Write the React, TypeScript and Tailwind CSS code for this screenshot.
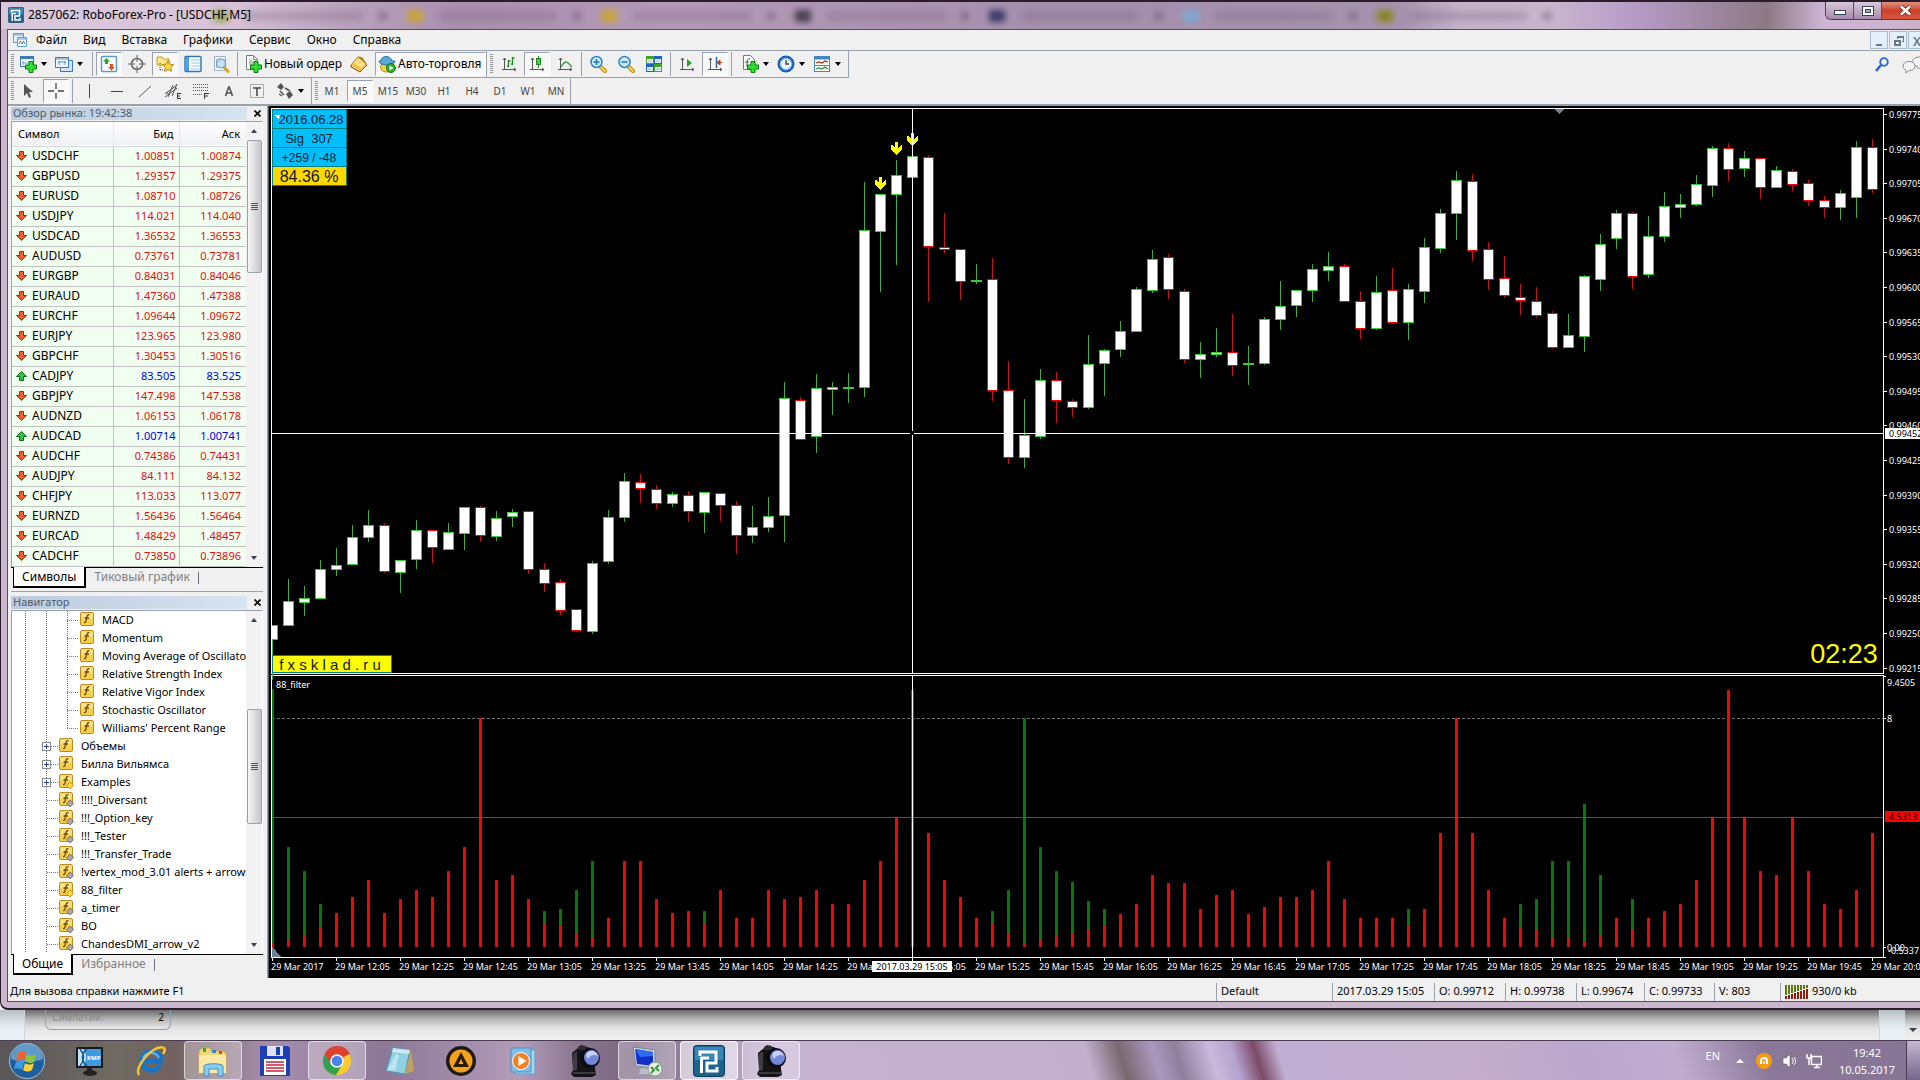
import React from "react";

type Dir = "g" | "r";
type Candle = [Dir, number, number, number, number];

// direction, high, body top, body bottom, low
const candles: Candle[] = [
  ["g", 625, 625, 640, 680], ["g", 579, 601, 626, 626], ["g", 586, 598, 603, 616], ["g", 560, 569, 599, 599],
  ["g", 548, 565, 570, 576], ["g", 525, 537, 565, 565], ["g", 510, 525, 538, 542], ["r", 523, 525, 572, 573],
  ["g", 560, 560, 573, 593], ["g", 520, 530, 560, 569], ["r", 530, 530, 548, 563], ["g", 523, 532, 550, 550],
  ["g", 507, 507, 534, 550], ["r", 506, 507, 536, 542], ["g", 511, 518, 537, 541], ["g", 509, 512, 517, 527],
  ["r", 511, 511, 570, 574], ["r", 563, 569, 584, 592], ["r", 579, 582, 611, 615], ["r", 609, 609, 631, 632],
  ["g", 561, 563, 632, 634], ["g", 510, 517, 562, 564], ["g", 473, 481, 518, 522], ["r", 474, 482, 489, 503],
  ["r", 485, 489, 504, 509], ["g", 492, 494, 504, 507], ["r", 491, 495, 512, 522], ["g", 492, 492, 513, 533],
  ["r", 493, 493, 506, 521], ["r", 501, 505, 536, 554], ["g", 506, 527, 536, 543], ["g", 497, 516, 528, 532],
  ["g", 382, 398, 516, 542], ["r", 397, 400, 440, 440], ["g", 374, 388, 437, 453], ["g", 382, 387, 390, 415],
  ["g", 373, 387, 389, 403], ["g", 182, 230, 388, 397], ["g", 194, 194, 232, 292], ["g", 160, 175, 195, 265],
  ["g", 156, 156, 178, 178], ["r", 155, 157, 247, 302], ["r", 213, 247, 250, 253], ["r", 249, 249, 282, 300],
  ["g", 264, 280, 282, 284], ["r", 258, 279, 391, 401], ["r", 361, 390, 458, 464], ["g", 399, 435, 458, 468],
  ["g", 369, 380, 437, 439], ["r", 372, 380, 401, 423], ["r", 399, 401, 408, 417], ["g", 335, 364, 408, 409],
  ["g", 349, 350, 364, 396], ["g", 321, 331, 350, 357], ["g", 287, 289, 332, 332], ["g", 250, 259, 291, 293],
  ["r", 254, 257, 290, 299], ["r", 289, 291, 360, 363], ["g", 342, 354, 360, 378], ["g", 328, 352, 355, 357],
  ["r", 314, 352, 366, 376], ["g", 346, 363, 365, 385], ["g", 317, 319, 364, 365], ["g", 281, 306, 320, 330],
  ["g", 290, 290, 306, 317], ["g", 264, 269, 291, 302], ["g", 252, 266, 271, 281], ["r", 264, 266, 302, 302],
  ["r", 291, 301, 329, 339], ["g", 276, 292, 329, 330], ["r", 268, 290, 323, 324], ["g", 284, 289, 323, 340],
  ["g", 238, 247, 292, 303], ["g", 209, 213, 249, 253], ["g", 171, 180, 214, 240], ["r", 174, 181, 251, 261],
  ["r", 242, 249, 280, 290], ["r", 256, 278, 296, 298], ["r", 284, 297, 301, 315], ["r", 287, 301, 316, 318],
  ["r", 311, 313, 348, 349], ["g", 314, 335, 348, 348], ["g", 275, 276, 337, 352], ["g", 234, 244, 280, 291],
  ["g", 210, 213, 239, 249], ["r", 212, 213, 277, 289], ["g", 216, 236, 275, 278], ["g", 192, 206, 237, 242],
  ["g", 194, 204, 208, 218], ["g", 175, 184, 205, 206], ["g", 146, 148, 186, 197], ["r", 143, 148, 170, 181],
  ["g", 151, 158, 169, 177], ["r", 158, 158, 188, 199], ["g", 166, 170, 188, 188], ["r", 169, 171, 185, 191],
  ["r", 180, 183, 201, 206], ["r", 196, 200, 208, 218], ["g", 190, 193, 208, 220], ["g", 141, 147, 198, 218],
  ["r", 139, 147, 190, 193],
];

// bar top, or [green top, red top]
const filter: (number | [number, number])[] = [
  [689, 944], [847, 939], [871, 936], [904, 928], 913, 897, 880, 913, 899, 890, 897, 871, 847, 718, 880, 875, 899,
  [911, 924], [909, 925], [890, 933], [861, 937], 918, 861, 861, 899, 913, 911, [911, 924], 890, 918, 918, 890,
  899, 897, 890, 904, 904, 880, 861, 817, 690, 833, 880, 897, 918, [911, 924], [890, 933], [718, 943], [847, 939],
  [871, 936], [882, 934], [901, 929], [909, 926], 914, 904, 875, 883, 883, 909, 895, 890, 914, 907, 897, 897, 890,
  861, 899, 918, 918, 918, [909, 926], 909, 833, 718, 833, 890, 918, [904, 928], [899, 930], [861, 937],
  [861, 937], [804, 941], [875, 936], 918, [899, 930], 918, 911, 904, 880, 817, 690, 817, 871, 875, 817, 871, 904,
  909, 890, 833,
];

const barX = (i: number) => 272 + i * 16;
const pad = (n: number) => String(n).padStart(2, "0");
const timeLabels = Array.from({ length: 26 }, (_, k) => {
  if (k === 0) return "29 Mar 2017";
  const m = 12 * 60 + 5 + (k - 1) * 20;
  return `29 Mar ${pad(Math.floor(m / 60))}:${pad(m % 60)}`;
});
const priceLabels = Array.from({ length: 17 }, (_, k) => (0.99775 - k * 0.00035).toFixed(5));

function Chart() {
  return (
    <svg
      className="block h-full w-full bg-black font-['Noto_Sans',sans-serif]"
      viewBox="269 106 1651 872"
      preserveAspectRatio="xMinYMin slice"
      role="img"
      aria-label="USDCHF,M5"
    >
      <defs>
        <clipPath id="plot"><rect x="272" y="109" width="1611" height="848" /></clipPath>
      </defs>
      <g shapeRendering="crispEdges">
        <path d="M271 108H1884V674H271ZM272 109V673H1883V109ZM271 675H1884V958H271ZM272 676V957H1883V676Z" fill="#fff" fillRule="evenodd" />
        <g clipPath="url(#plot)">
          {candles.map(([d, hi, top, bot, lo], i) => {
            const c = d === "g" ? "#32cd32" : "#ff0000";
            const x = barX(i);
            return (
              <g key={i}>
                <rect x={x} y={hi} width="1" height={lo - hi} fill={d === "g" ? "#3fae3f" : "#c81414"} />
                <rect x={x - 5} y={top} width="11" height={bot - top} fill={c} />
                {bot - top > 2 && <rect x={x - 4} y={top + 1} width="9" height={bot - top - 2} fill="#fff" />}
              </g>
            );
          })}
          <path d="M272 718.5H1883" stroke="#6f6f6f" strokeDasharray="3 2" />
          {filter.map((v, i) => {
            const x = barX(i) - 1;
            return Array.isArray(v) ? (
              <g key={i}>
                <rect x={x} y={v[0]} width="3" height={947 - v[0]} fill="#0b760b" />
                <rect x={x} y={v[1]} width="3" height={947 - v[1]} fill="#e80808" />
              </g>
            ) : (
              <rect key={i} x={x} y={v} width="3" height={947 - v} fill="#f00808" />
            );
          })}
          <path d="M272 817.5H1883" stroke="#f01010" />
          <path d="M272 946V957H281Z" fill="#708090" />
        </g>
        <path d="M1555 109H1564L1559.5 114Z" fill="#708090" />
        {[[880, 177], [896, 142], [912, 133]].map(([x, y]) => (
          <path key={x} d={`M${x - 1} ${y}h3v6l3-3h1v4l-5 6h-1l-5-6v-4h1l3 3Z`} fill="#ffff00" />
        ))}
        <path d="M271 433.5H910M914 433.5H1884M912.5 109V431M912.5 435V673M912.5 676V958" stroke="#fff" />
        <path d="M911 431h3v4h-3z" fill="#000" />

        <g stroke="#008080">
          <rect x="272.5" y="109.5" width="74" height="19" fill="#00bfff" />
          <rect x="272.5" y="128.5" width="74" height="19" fill="#00bfff" />
          <rect x="272.5" y="147.5" width="74" height="19" fill="#00bfff" />
          <rect x="272.5" y="166.5" width="74" height="19" fill="#ffd700" />
          <rect x="272.5" y="655.5" width="119" height="17" fill="#ffff00" />
        </g>
        <path d="M275 115h7l-3.500 4z" fill="#fff" />
        {priceLabels.map((_, k) => (
          <rect key={k} x="1884" y={Math.round(114 + k * 34.6)} width="3" height="1" fill="#fff" />
        ))}
        {timeLabels.map((_, k) => (
          <rect key={k} x={272 + 64 * k} y="958" width="1" height="3" fill="#fff" />
        ))}
        <path d="M1884 676h2v1h-2zM1884 718h2v1h-2zM1884 947h2v1h-2zM1884 957h2v1h-2z" fill="#fff" />
      </g>

      <g className="font-['Liberation_Sans',Arial,sans-serif]" fill="#0a1a2a" textAnchor="middle">
        <text x="311" y="124" fontSize="13">2016.06.28</text>
        <text x="309" y="143" fontSize="13">Sig&#160; 307</text>
        <text x="309" y="162" fontSize="12">+259 / -48</text>
        <text x="309" y="182" fontSize="16">84.36 %</text>
        <text x="330" y="670" fontSize="15">f x s k l a d . r u</text>
        <text x="1844" y="663" fontSize="27" fill="#ffff00">02:23</text>
      </g>

      <g fill="#fff" fontSize="9">
        {priceLabels.map((p, k) => (
          <text key={p} x="1889" y={Math.round(118 + k * 34.6)}>{p}</text>
        ))}
        {timeLabels.map((t, k) => (
          <text key={t} x={271 + 64 * k} y="970">{t}</text>
        ))}
        <text x="276" y="688">88_filter</text>
        <text x="1887" y="686">9.4505</text>
        <text x="1887" y="722">8</text>
        <text x="1887" y="951">0.00</text>
        <text x="1888" y="954">-0.5337</text>
      </g>
      <rect x="1885" y="428" width="35" height="11" fill="#fff" />
      <rect x="1885" y="811" width="35" height="11" fill="#f00" />
      <rect x="872" y="961" width="80" height="11" fill="#fff" />
      <g fill="#000" fontSize="9">
        <text x="1889" y="437">0.99452</text>
        <text x="1889" y="820">4.5313</text>
        <text x="912" y="970" textAnchor="middle">2017.03.29 15:05</text>
      </g>
    </svg>
  );
}

/* ---------- toolbar icons ---------- */

const I = ({ children, w = 18 }: { children: React.ReactNode; w?: number }) => (
  <svg viewBox="0 0 18 18" width={w} height={w} fill="none" className="shrink-0" aria-hidden="true">{children}</svg>
);
const Plus = () => <path d="M10 6.500h4v3.500h3.500v4H14v3.500h-4V14H6.500v-4H10z" fill="#2ee02e" stroke="#0b7d12" />;
const Mag = ({ minus }: { minus?: boolean }) => (
  <I>
    <path d="M11 11l5 5" stroke="#b98a12" strokeWidth="4" strokeLinecap="round" />
    <path d="M11 11l5 5" stroke="#ffd84a" strokeWidth="2" strokeLinecap="round" />
    <circle cx="7.500" cy="7" r="5.500" fill="#c9ecff" stroke="#2f86c4" strokeWidth="1.500" />
    <path d={minus ? "M4.500 7h6" : "M4.500 7h6M7.500 4v6"} stroke="#2272bb" strokeWidth="1.500" />
  </I>
);
const Axes = () => <path d="M4.500 3v12M2 14.500h14M3 5l1.500-2L6 5M14 13l2 1.500-2 1.500" stroke="#555" />;

const icons: Record<string, React.ReactNode> = {
  newChart: <I><rect x="1.500" y="1.500" width="13" height="10" fill="#eaf4ff" stroke="#3c7ab5" /><path d="M2 3h12" stroke="#3c7ab5" strokeWidth="2" /><path d="M4 6v4M4 8h7" stroke="#7aa6cf" /><Plus /></I>,
  profiles: <I><path d="M5.500 5.500h12v11h-12z" fill="#cfe4f8" stroke="#3c7ab5" /><path d="M.500 2.500h13v10H.500z" fill="#f1f8ff" stroke="#3c7ab5" /><path d="M1 4h12M3 7h8M4 6v4M10 6v4" stroke="#5b8fc4" /></I>,
  market: <I><rect x="1.500" y="1.500" width="15" height="15" rx="1" fill="#fff" stroke="#5b9bd0" strokeWidth="1.500" /><path d="M6.500 3l3.500 3.500H8V9H5V6.500H3z" fill="#22a722" /><path d="M11.500 15.500L15 12h-2V9h-3v3H8z" fill="#e0501e" /></I>,
  target: <I><circle cx="9" cy="9" r="5.500" stroke="#666" strokeWidth="1.500" /><path d="M9 0v7M9 11v7M0 9h7M11 9h7" stroke="#666" /></I>,
  star: <I><path d="M1 2h5l1.500 2H13v6H1z" fill="#ffe88a" stroke="#c79a1e" /><path d="M4 8v8M4 15h4" stroke="#444" strokeDasharray="1 1" /><path d="M12 5.500l1.700 3.700 3.900.4-2.900 2.700.8 4-3.500-2-3.500 2 .8-4-2.900-2.700 3.900-.4z" fill="#ffdf3d" stroke="#b8860b" /></I>,
  data: <I><rect x="1" y="1.500" width="16" height="15" rx="1" fill="#fff" stroke="#2f78b8" strokeWidth="1.500" /><path d="M2 2h3v14H2z" fill="#4b9be0" /><path d="M7 5h9M7 8h9M7 11h9M7 14h9M3 5h1M3 8h1M3 11h1" stroke="#9cc3e6" /></I>,
  tester: <I><path d="M2.500 1.500h11v14h-11z" fill="#f5f9fd" stroke="#9bb3c9" /><path d="M5 4v9M8 3v5M12 4v7" stroke="#779" /><path d="M12 12l4 4.500" stroke="#d9a420" strokeWidth="3" strokeLinecap="round" /><circle cx="9" cy="8.500" r="4.500" fill="#bfe1fa" fillOpacity=".85" stroke="#5f93bd" /></I>,
  order: <I><path d="M2.500.500h7l4 4v10h-11z" fill="#fff" stroke="#777" /><path d="M9.500.500v4h4M5 5h3M5 7h6M5 9h4" stroke="#888" /><Plus /></I>,
  gold: <I><path d="M1 10L8 2l4 1 5 7-7 7-9-5z" fill="#d08d14" stroke="#8a5c06" /><path d="M1 10L8 2l8 7-6 6z" fill="#f7bd3c" /><path d="M8 3l7 6-4 4-7-5z" fill="#ffdf8a" /><path d="M2 11l8 4.500 6-6" stroke="#fff3c8" /></I>,
  auto: <I><ellipse cx="8.500" cy="12" rx="6" ry="5" fill="#f7d24a" stroke="#b08616" /><path d="M3 6c0-6 10-6 11 0l3 0c0 2-3 4-8 4S1 8 1 6z" fill="#58a8dd" stroke="#2b6e9f" /><circle cx="13" cy="13" r="4.500" fill="#29b42b" stroke="#0f7013" /><path d="M11.500 10.500l4 2.500-4 2.500z" fill="#fff" /></I>,
  bars: <I><Axes /><path d="M8.500 5v7M7 11h1.500M8.500 6h2M12.500 2v8M12.500 3h2M11 9h1.500" stroke="#1c8a1c" strokeWidth="1.300" /></I>,
  candle: <I><Axes /><path d="M10.500 1v12" stroke="#1c8a1c" /><rect x="8.500" y="3.500" width="4" height="6" fill="#45cf45" stroke="#1c8a1c" /></I>,
  line: <I><Axes /><path d="M5 12c2-3 3-5 5-5s3 2 6 5" stroke="#3a9c3a" strokeWidth="1.300" /></I>,
  zoomIn: <Mag />,
  zoomOut: <Mag minus />,
  tile: <I><path d="M1 1h8v8H1zM9 9h8v8H9z" fill="#3fa51f" /><path d="M9 1h8v8H9zM1 9h8v8H1z" fill="#1f62c4" /><path d="M2 4h6v4H2zM10 4h6v4h-6zM2 12h6v4H2zM10 12h6v4h-6z" fill="#e8f3ff" /><path d="M3 6h4M11 6h4M3 14h4M11 14h4" stroke="#8fb1d6" /></I>,
  scroll: <I><Axes /><path d="M9 4l5 4-5 4z" fill="#28a428" /></I>,
  shift: <I><Axes /><path d="M10.500 2v11" stroke="#2b66a8" strokeWidth="1.500" /><path d="M16 7.500h-4M14 5l-3 2.500 3 2.500z" stroke="#c03a10" fill="#c03a10" /></I>,
  indic: <I><path d="M2.500.500h7l4 4v10h-11z" fill="#fff" stroke="#777" /><path d="M9 4c-3-1-3 2-3 8M4 7h4" stroke="#555" /><Plus /></I>,
  clock: <I><circle cx="9" cy="9" r="8" fill="#1e74cf" stroke="#0f4b94" /><circle cx="9" cy="9" r="5.500" fill="#f4f9ff" stroke="#8abdf0" /><path d="M9 5v4h3" stroke="#333" strokeWidth="1.300" /></I>,
  templ: <I><rect x="1.500" y="1.500" width="15" height="15" fill="#fff" stroke="#4d86bd" /><path d="M2 3h14" stroke="#3d86cf" strokeWidth="3" /><path d="M2 10.500h14" stroke="#4d86bd" /><path d="M3 8l3-1 3 1 3-2 3 1" stroke="#a02b10" strokeWidth="1.300" /><path d="M3 14l3-1 3 1 3-2 3 2" stroke="#2b8b2b" strokeWidth="1.300" /></I>,
  cursor: <I><path d="M5 2v12l3-3 2 5 2-1-2-5h4z" fill="#555" /></I>,
  cross: <I><path d="M9 1v6M9 11v6M1 9h6M11 9h6" stroke="#444" strokeWidth="1.300" /></I>,
  vline: <I><path d="M9.500 2v14" stroke="#444" /></I>,
  hline: <I><path d="M3 9.500h12" stroke="#444" /></I>,
  diag: <I><path d="M3 15L15 4" stroke="#555" /></I>,
  channel: <I><path d="M1 12l12-9M1 15l12-9M4 15L9 3M8 14l5-12M2 10l4 3" stroke="#555" /><path d="M13 11.500h4M13 14h3M13 16.500h4M13.500 11v6" stroke="#333" /></I>,
  fib: <I><path d="M1 2.500h15M1 5.500h15M1 8.500h15M1 12.500h9" stroke="#555" strokeDasharray="1 1" /><path d="M12.500 11v6M12 11.500h5M12 14h4" stroke="#333" /></I>,
  textA: <I><path d="M5.500 14L8.700 5h.6l3.200 9M6.500 11h5" stroke="#555" strokeWidth="1.600" /></I>,
  label: <I><rect x="2.500" y="2.500" width="13" height="13" stroke="#666" strokeDasharray="1 1" /><path d="M5 6h8M9 6v8" stroke="#444" strokeWidth="1.500" /></I>,
  arrows: <I><path d="M1 5l4-4 3 4-3 3zM10 12l4-3 3 4-4 4z" fill="#555" /><path d="M4 9l4 4M9 6l5 3M3 12l3 2" stroke="#555" strokeWidth="1.500" /></I>,
};

const pressedBg = "border border-r-white border-b-white border-l-gray-400 border-t-gray-400 bg-[#f8f8f8]";

const Caret = () => <span className="h-0 w-0 border-x-[3px] border-t-4 border-x-transparent border-t-black" />;
function Tool({ name, pressed, caret }: { name: string; pressed?: boolean; caret?: boolean }) {
  return (
    <button
      type="button"
      aria-label={name}
      className={`mx-px flex h-6 shrink-0 items-center gap-1 ${caret ? "w-[34px] justify-start" : "w-[26px] justify-center"} ${pressed ? pressedBg : ""}`}
    >
      {icons[name]}
      {caret && <Caret />}
    </button>
  );
}
const Sep = () => <span className="mx-0.5 h-6 w-px shrink-0 bg-gray-400" />;
const Grip = () => (
  <span className="h-5 w-[3px] shrink-0 bg-[repeating-linear-gradient(to_bottom,#9a9a9a_0_1px,transparent_1px_2px)]" />
);

/* ---------- side panels ---------- */

const quotes: [string, string, string, boolean?][] = [
  ["USDCHF", "1.00851", "1.00874"], ["GBPUSD", "1.29357", "1.29375"], ["EURUSD", "1.08710", "1.08726"],
  ["USDJPY", "114.021", "114.040"], ["USDCAD", "1.36532", "1.36553"], ["AUDUSD", "0.73761", "0.73781"],
  ["EURGBP", "0.84031", "0.84046"], ["EURAUD", "1.47360", "1.47388"], ["EURCHF", "1.09644", "1.09672"],
  ["EURJPY", "123.965", "123.980"], ["GBPCHF", "1.30453", "1.30516"], ["CADJPY", "83.505", "83.525", true],
  ["GBPJPY", "147.498", "147.538"], ["AUDNZD", "1.06153", "1.06178"], ["AUDCAD", "1.00714", "1.00741", true],
  ["AUDCHF", "0.74386", "0.74431"], ["AUDJPY", "84.111", "84.132"], ["CHFJPY", "113.033", "113.077"],
  ["EURNZD", "1.56436", "1.56464"], ["EURCAD", "1.48429", "1.48457"], ["CADCHF", "0.73850", "0.73896"],
];

const Arrow = ({ up }: { up?: boolean }) => (
  <svg width="11" height="10" viewBox="0 0 11 10" className="shrink-0" aria-hidden="true">
    {up ? (
      <path d="M5.500.500l5 5h-3v4h-4v-4h-3z" fill="#2fc43c" stroke="#0c6b17" />
    ) : (
      <path d="M5.500 9.500l5-5h-3v-4h-4v4h-3z" fill="#f0622d" stroke="#9c2b0a" />
    )}
  </svg>
);

function PanelTitle({ children }: { children: React.ReactNode }) {
  return (
    <div className="flex h-[14px] items-center">
      <h2 className="h-[13px] flex-1 bg-linear-to-r from-[#bccbdc] to-[#d6e3f1] pl-0.5 text-[11px] leading-3 text-[#4a5a6a]">{children}</h2>
      <button type="button" aria-label="Закрыть" className="ml-1 flex h-3 w-3 items-center justify-center">
        <svg width="7" height="7" viewBox="0 0 7 7"><path d="M.500.500l6 6M6.500.500l-6 6" stroke="#000" strokeWidth="1.600" /></svg>
      </button>
    </div>
  );
}

function ScrollBar({ gap, thumb }: { gap: string; thumb: string }) {
  return (
    <div className="flex w-4 shrink-0 flex-col items-center bg-[#f2f2f2]">
      <div className="flex h-[18px] items-center"><span className="h-0 w-0 border-x-[3px] border-b-4 border-x-transparent border-b-gray-700" /></div>
      <div className={gap} />
      <div className={`flex w-[15px] flex-col items-center justify-center gap-px rounded-xs border border-gray-400 bg-linear-to-r from-[#f5f5f5] to-[#c4c5ca] ${thumb}`}>
        <span className="h-px w-[7px] bg-gray-600" />
        <span className="h-px w-[7px] bg-gray-600" />
        <span className="h-px w-[7px] bg-gray-600" />
        <span className="h-px w-[7px] bg-gray-600" />
      </div>
      <div className="flex-1" />
      <div className="flex h-[18px] items-center"><span className="h-0 w-0 border-x-[3px] border-t-4 border-x-transparent border-t-gray-700" /></div>
    </div>
  );
}

function PanelTabs({ first, second }: { first: string; second: string }) {
  return (
    <div className="flex h-[21px] border-t border-black pl-[2px] text-[12px] leading-4">
      <button type="button" className="-mt-px h-[21px] border border-t-0 border-r-2 border-b-2 border-black bg-white px-2 text-black">{first}</button>
      <button type="button" className="h-[18px] px-2 text-[#808080]">{second}</button>
      <span className="mt-1 h-3 w-px bg-gray-500" />
    </div>
  );
}

type Node = { t: string; level: 2 | 3; plus?: boolean; gem?: "y" | "n" };
const nodes: Node[] = [
  { t: "MACD", level: 3 }, { t: "Momentum", level: 3 }, { t: "Moving Average of Oscillator", level: 3 },
  { t: "Relative Strength Index", level: 3 }, { t: "Relative Vigor Index", level: 3 },
  { t: "Stochastic Oscillator", level: 3 }, { t: "Williams' Percent Range", level: 3 },
  { t: "Объемы", level: 2, plus: true }, { t: "Билла Вильямса", level: 2, plus: true },
  { t: "Examples", level: 2, plus: true, gem: "y" }, { t: "!!!!_Diversant", level: 2, gem: "n" },
  { t: "!!!_Option_key", level: 2, gem: "n" }, { t: "!!!_Tester", level: 2, gem: "n" },
  { t: "!!!_Transfer_Trade", level: 2, gem: "n" }, { t: "!vertex_mod_3.01 alerts + arrows", level: 2, gem: "n" },
  { t: "88_filter", level: 2, gem: "y" }, { t: "a_timer", level: 2, gem: "n" }, { t: "BO", level: 2, gem: "n" },
  { t: "ChandesDMI_arrow_v2", level: 2, gem: "n" },
];

function TreeRow({ n, last }: { n: Node; last: boolean }) {
  const deep = n.level === 3;
  return (
    <li className="flex h-[18px] items-center whitespace-nowrap">
      <svg width={deep ? 67 : 46} height="18" className="shrink-0" shapeRendering="crispEdges" aria-hidden="true">
        <path d="M13.500 0V18M34.500 0V18" stroke="#777" strokeDasharray="1 1" />
        {deep ? (
          <path d={last ? "M55.500 0V10M55 9.500H66" : "M55.500 0V18M55 9.500H66"} stroke="#777" strokeDasharray="1 1" />
        ) : (
          <path d="M35 9.500H46" stroke="#777" strokeDasharray="1 1" />
        )}
        {n.plus && (
          <>
            <rect x="30.500" y="5.500" width="8" height="8" fill="#fff" stroke="#8a8a8a" />
            <path d="M32 9.500h5M34.500 7v5" stroke="#27408b" />
          </>
        )}
      </svg>
      <svg width="16" height="16" viewBox="0 0 16 16" className="mb-0.5 shrink-0" aria-hidden="true">
        <rect x="1.500" y="1.500" width="13" height="13" rx="1.500" fill="#f7cf4d" stroke="#bd8a1a" />
        <path d="M2.500 2.500h11v5h-11z" fill="#fbe48c" />
        <path d="M10.500 4c-2-.800-2.600.500-3 3.500S6.500 12 5 11.500M5.500 7h4.500" fill="none" stroke="#6b4a08" strokeWidth="1.300" />
        {n.gem && <path d="M12 9l3.500 3.500L12 16l-3.500-3.500z" fill={n.gem === "y" ? "#ffd84a" : "#a5a9ae"} stroke={n.gem === "y" ? "#b8860b" : "#666"} strokeWidth=".8" />}
      </svg>
      <span className="pl-[7px]">{n.t}</span>
    </li>
  );
}

function SidePanels() {
  return (
    <aside className="flex w-[260px] shrink-0 flex-col border-r border-gray-400 bg-[#f0f0f0] pr-1 pl-[3px] text-[11px]">
      <section className="border-b border-gray-400 pb-[3px]">
        <PanelTitle>Обзор рынка: 19:42:38</PanelTitle>
        <div className="mt-px flex h-[446px] overflow-hidden border border-b-0 border-gray-400 border-r-white bg-[#f0fff0]">
          <table className="min-w-0 flex-1 table-fixed border-collapse self-start">
            <thead>
              <tr className="h-6 border-b border-gray-300 bg-linear-to-b from-white to-[#f0f1f3]">
                <th className="w-[101px] border-r border-gray-200 pl-[6px] text-left font-normal">Символ</th>
                <th className="w-[66px] border-r border-gray-200 pr-[5px] text-right font-normal">Бид</th>
                <th className="pr-[6px] text-right font-normal">Аск</th>
              </tr>
            </thead>
            <tbody>
              {quotes.map(([s, b, a, up]) => (
                <tr key={s} className={`h-5 border-b border-[#c0c0c0] ${up ? "text-[#0000e0]" : "text-[#e01010]"}`}>
                  <td className="border-r border-[#c0c0c0] p-0 pl-1 text-[12px] text-black">
                    <span className="flex items-center gap-[5px] leading-4"><Arrow up={up} />{s}</span>
                  </td>
                  <td className="border-r border-[#c0c0c0] p-0 pr-[3px] text-right leading-4">{b}</td>
                  <td className="p-0 pr-[5px] text-right leading-4">{a}</td>
                </tr>
              ))}
            </tbody>
          </table>
          <ScrollBar gap="h-0" thumb="h-[133px]" />
        </div>
        <PanelTabs first="Символы" second="Тиковый график" />
      </section>
      <section className="pt-[3px]">
        <PanelTitle>Навигатор</PanelTitle>
        <div className="mt-px flex h-[344px] overflow-hidden border border-b-0 border-gray-400 border-r-white bg-white">
          <ul className="min-w-0 flex-1 overflow-hidden">
            {nodes.map((n, i) => (
              <TreeRow key={n.t} n={n} last={i === 6} />
            ))}
          </ul>
          <ScrollBar gap="h-[80px]" thumb="h-[115px]" />
        </div>
        <PanelTabs first="Общие" second="Избранное" />
      </section>
    </aside>
  );
}

/* ---------- window chrome ---------- */

const RLogo = ({ size }: { size: number }) => (
  <svg width={size} height={size} viewBox="0 0 32 32" className="shrink-0" aria-hidden="true">
    <rect x=".5" y=".5" width="31" height="31" rx="3" fill="#1d6390" stroke="#0c3a58" />
    <path d="M2 2h28v13H2z" fill="#3987b4" />
    <path d="M7 11V7h16v11h-9v8h10v-4" fill="none" stroke="#fff" strokeWidth="3" />
    <path d="M8.500 12v16M8 13h8" fill="none" stroke="#fff" strokeWidth="3" />
  </svg>
);

const ghostTabs = ["bg-[#9aa860]", "bg-[#c9a43a]", "bg-[#c9a43a]", "bg-[#4a3f4d]", "bg-[#3c3a6a]", "bg-[#7fa8cf]", "bg-[#8c8428]"];

function TitleBar() {
  return (
    <header className="relative flex h-[29px] items-start overflow-hidden border-t-2 border-[#2b1c2c] bg-[linear-gradient(90deg,#d9c8dc_0%,#d8c3d8_12%,#b9a2bd_18%,#a98fae_24%,#b49bb8_35%,#a48fac_55%,#a593ad_73%,#c5b3cb_76%,#c9b5cd_81%,#b79cc8_85%,#8d7984_92%,#cdb6d6_95%,#cbb3cb_100%)]">
      <div className="absolute top-2 left-[212px] flex blur-[3px]" aria-hidden="true">
        {ghostTabs.map((c, i) => (
          <span key={i} className="flex w-[194px] items-center gap-4">
            <span className={`h-3 w-4 ${c}`} />
            <span className="h-2.5 w-[118px] bg-[#7a657f]/30" />
            <span className="h-2 w-2 bg-[#6a4a6a]/50" />
          </span>
        ))}
      </div>
      <div className="relative flex h-[26px] flex-1 items-center gap-1 pl-[7px] text-[12px] text-black">
        <RLogo size={16} />
        <h1>2857062: RoboForex-Pro - [USDCHF,M5]</h1>
      </div>
      <div className="relative flex h-[18px] overflow-hidden rounded-bl-md border border-t-0 border-r-0 border-[#4b3a52]">
        <button type="button" aria-label="Свернуть" className="flex w-7 items-end justify-center border-r border-[#5b4a62] bg-linear-to-b from-[#d9c9dd] to-[#a58ba9] pb-1">
          <span className="h-[5px] w-3 border border-gray-700 bg-white" />
        </button>
        <button type="button" aria-label="Развернуть" className="flex w-7 items-center justify-center border-r border-[#5b4a62] bg-linear-to-b from-[#d9c9dd] to-[#a58ba9]">
          <span className="h-2.5 w-3 border border-gray-700 bg-white p-0.5"><span className="block h-full border border-gray-700 bg-[#b9a3bd]" /></span>
        </button>
        <button type="button" aria-label="Закрыть" className="flex w-[38px] items-center justify-center bg-linear-to-b from-[#e0927f] via-[#c9402a] to-[#d8573d] pl-2">
          <svg width="13" height="11" viewBox="0 0 13 11"><path d="M2 1.500l9 8M11 1.500l-9 8" stroke="#5a2a2a" strokeWidth="4" /><path d="M2 1.500l9 8M11 1.500l-9 8" stroke="#fff" strokeWidth="2.500" /></svg>
        </button>
      </div>
    </header>
  );
}

const menus = ["Файл", "Вид", "Вставка", "Графики", "Сервис", "Окно", "Справка"];
const mdi = ["M4 11h6v2H4z", "M6 3h7v6h-2v-1h1V5H7v1H6zM3 7h7v6H3zM5 9v2h3V9z", "M3 4h2l2 3 2-3h2L8 8l3 5H9L7 9.500 5 13H3l3-5z"];

function MenuBar() {
  return (
    <nav className="flex h-[21px] items-center border-b border-gray-400 bg-[#f0f0f0] text-[12px]">
      <svg width="16" height="16" viewBox="0 0 16 16" className="ml-1 shrink-0" fill="none" aria-hidden="true">
        <path d="M1.500 1.500h10v9h-10z" fill="#e8f3ff" stroke="#5c9bd8" />
        <path d="M5.500 5.500h9v9h-9z" fill="#fff" stroke="#5c9bd8" />
        <path d="M2 3h9M6 7h8" stroke="#5c9bd8" />
        <path d="M7 12l1.500-3 1.500 3 1.500-3 1.500 3" stroke="#4884c4" />
      </svg>
      <div className="flex flex-1">
        {menus.map((m) => (
          <button key={m} type="button" className="px-2">{m}</button>
        ))}
      </div>
      <div className="-mr-1.5 flex gap-px">
        {mdi.map((d, i) => (
          <button key={i} type="button" aria-label={["Свернуть", "Восстановить", "Закрыть"][i]} className="flex h-[18px] w-[18px] items-center justify-center border border-[#a9bccb] bg-[#e3effa]">
            <svg width="15" height="15" viewBox="0 0 15 15"><path d={d} fill="#65788c" fillRule="evenodd" /></svg>
          </button>
        ))}
      </div>
    </nav>
  );
}

const frames = ["M1", "M5", "M15", "M30", "H1", "H4", "D1", "W1", "MN"];

function Toolbars() {
  return (
    <div className="border-b-2 border-gray-400 bg-[#f0f0f0]">
      <div className="flex h-[27px] items-center">
        <div className="flex h-full items-center border-r border-b border-gray-400 pl-[3px] text-[12px]">
          <Grip />
          <div className="flex items-center pl-1">
            <Tool name="newChart" caret />
            <Tool name="profiles" caret />
          </div>
          <Sep />
          <Tool name="market" pressed />
          <Tool name="target" />
          <Tool name="star" pressed />
          <Tool name="data" />
          <Tool name="tester" />
          <Sep />
          <button type="button" className="flex h-6 w-[105px] items-center gap-0.5 pl-1 whitespace-nowrap">{icons.order}Новый ордер</button>
          <Tool name="gold" />
          <button type="button" className={`ml-0.5 flex h-6 w-[111px] items-center gap-0.5 pl-0.5 whitespace-nowrap ${pressedBg}`}>{icons.auto}Авто-торговля</button>
        </div>
        <div className="flex h-full items-center border-r border-b border-gray-400 pl-[3px]">
          <Grip />
          <div className="flex items-center pl-0.5">
            <Tool name="bars" />
            <Tool name="candle" pressed />
            <Tool name="line" />
          </div>
          <Sep />
          <Tool name="zoomIn" />
          <Tool name="zoomOut" />
          <Tool name="tile" />
          <Sep />
          <Tool name="scroll" />
          <Tool name="shift" pressed />
          <Sep />
          <div className="flex items-center pl-1.5">
            <Tool name="indic" caret />
            <Tool name="clock" caret />
            <Tool name="templ" caret />
          </div>
        </div>
        <div className="-mr-2 ml-auto flex items-center gap-3">
          <button type="button" aria-label="Поиск">
            <svg width="16" height="16" viewBox="0 0 16 16" fill="none"><circle cx="10" cy="5" r="3.800" stroke="#2b62d0" strokeWidth="1.800" /><path d="M7 8l-5 6" stroke="#2b62d0" strokeWidth="2.500" /></svg>
          </button>
          <button type="button" aria-label="Сообщения">
            <svg width="26" height="18" viewBox="0 0 26 18" fill="#f4f4f4" stroke="#8a8a8a"><path d="M10 7c0-4 4-6 8-6s8 2 8 6-4 6-8 6z" /><path d="M1 10c0-3 3-4.500 6-4.500s6 1.500 6 4.500-3 4.500-6 4.500L4 17v-3C2 13 1 12 1 10z" /></svg>
          </button>
        </div>
      </div>
      <div className="flex h-[26px] items-center">
        <div className="flex h-full items-center border-r border-gray-400 pl-[3px]">
          <Grip />
          <Tool name="cursor" />
          <Tool name="cross" pressed />
          <Sep />
          <Tool name="vline" />
          <Tool name="hline" />
          <Tool name="diag" />
          <Tool name="channel" />
          <Tool name="fib" />
          <Tool name="textA" />
          <Tool name="label" />
          <div className="pl-1"><Tool name="arrows" caret /></div>
        </div>
        <div className="flex h-full items-center border-r border-gray-400 pl-[3px]">
          <Grip />
          {frames.map((f) => (
            <button key={f} type="button" className={`mx-px flex h-[22px] w-[26px] items-center justify-center text-[10px] text-[#444] ${f === "M5" ? pressedBg : ""}`}>{f}</button>
          ))}
        </div>
      </div>
    </div>
  );
}

const statusCells: [string, string][] = [
  ["Default", "w-[116px]"], ["2017.03.29 15:05", "w-[102px]"], ["O: 0.99712", "w-[71px]"], ["H: 0.99738", "w-[71px]"],
  ["L: 0.99674", "w-[68px]"], ["C: 0.99733", "w-[70px]"], ["V: 803", "w-[66px]"],
];

function StatusBar() {
  return (
    <footer className="flex h-6 items-center border-b border-[#5b4a5e] bg-[#f0f0f0] pt-1 text-[11px] whitespace-nowrap">
      <p className="flex-1 pl-0.5">Для вызова справки нажмите F1</p>
      {statusCells.map(([t, w]) => (
        <span key={t} className={`flex h-[18px] items-center border-l border-gray-400 pl-1 ${w}`}>{t}</span>
      ))}
      <span className="flex h-[18px] w-[140px] items-center gap-[3px] border-l border-gray-400 pl-1">
        <svg width="24" height="14" viewBox="0 0 24 14" shapeRendering="crispEdges" aria-hidden="true">
          {Array.from({ length: 8 }, (_, i) => (
            <g key={i}>
              <rect x={i * 3} y="0" width="2" height={10 - i} fill="#5c7a10" />
              <rect x={i * 3} y={11 - i} width="2" height={3 + i} fill="#8f1d0c" />
            </g>
          ))}
        </svg>
        930/0 kb
      </span>
    </footer>
  );
}

/* ---------- taskbar ---------- */

const T = ({ children, vb = "0 0 32 32" }: { children: React.ReactNode; vb?: string }) => (
  <svg viewBox={vb} width="32" height="32" fill="none" aria-hidden="true">{children}</svg>
);
const camera = (
  <T>
    <path d="M3 8l6-5 10-1 7 5v17l1 6-4 2H5l-3-3 2-4z" fill="#141416" />
    <path d="M4 9l4-3v19l-4 1z" fill="#3d3d42" />
    <path d="M4 27h22v2H4z" fill="#3a3a3e" />
    <path d="M9 2l3-2 5 1v4H9z" fill="#2c2c30" />
    <ellipse cx="21" cy="13" rx="10" ry="10" fill="#0d0d10" />
    <ellipse cx="22.500" cy="12.500" rx="7.500" ry="7.500" fill="#7388da" />
    <path d="M18 8c4-4 9-2 11 3-3-2-8-1-10 3-2-2-2-4-1-6z" fill="#c5d0fb" />
  </T>
);
const apps: { name: string; icon: React.ReactNode; state?: "open" | "active" }[] = [
  { name: "KMPlayer", icon: <T><rect x="3" y="2" width="27" height="21" rx="1" fill="#1a1a1a" /><rect x="5" y="4" width="23" height="17" fill="#3d9be0" /><path d="M5 4h5c4 6 4 11 0 17H5z" fill="#bfe4fa" /><path d="M14 4c-6 5-6 12 0 17M7 4c5 6 5 11 0 17" stroke="#17507c" strokeWidth="1.500" /><text x="14" y="15" fontSize="6" fontWeight="700" fill="#fff">KMP</text><path d="M14 23h5v3h-5z" fill="#222" /><ellipse cx="17" cy="28" rx="7" ry="3" fill="#222" /></T> },
  { name: "Internet Explorer", icon: <T><path d="M25 20a9.500 9.500 0 1 1 1-4H9" stroke="#1a74c4" strokeWidth="5" /><path d="M8 13a9 9 0 0 1 16 0" stroke="#59b8f2" strokeWidth="2" /><path d="M4 30C-2 22 20-2 29 3c2 2 0 4-1 6" stroke="#f4c430" strokeWidth="2.500" /></T> },
  { name: "Проводник", state: "open", icon: <T><path d="M2 6l3-3h8l2 3h12l2 3v19H2z" fill="#f0d878" stroke="#c9a74a" /><path d="M6 3h3v4H6z" fill="#3ba53b" /><path d="M15 5h4v3h-4z" fill="#3f7fd0" /><path d="M22 6h3v3h-3z" fill="#c94f2a" /><path d="M2 10h27v18H2z" fill="#fae9a4" /><path d="M7 31V21c0-3 19-3 19 0v10h-5v-7h-9v7z" fill="#8ccbee" stroke="#3f8fc4" /></T> },
  { name: "Save", icon: <T><path d="M1 1h28l2 2v28H1z" fill="#1f3fb4" /><path d="M8 1h16v10H8z" fill="#dfe4f2" /><path d="M17 2h4v8h-4z" fill="#1f3fb4" /><path d="M5 14h22v16H5z" fill="#fff" /><path d="M7 17h18M7 20h18M7 23h18M7 26h18" stroke="#c8203a" strokeWidth="1.300" /></T> },
  { name: "Google Chrome", state: "open", icon: <T><circle cx="16" cy="16" r="14" fill="#fbcb2e" /><path d="M16 16L3.900 9A14 14 0 0 1 28.100 9z" fill="#e0402f" /><path d="M16 9h13A14 14 0 0 0 3.500 9.500L10 20z" fill="#e0402f" /><path d="M10 19L3.500 9.500A14 14 0 0 0 15 30l6-10z" fill="#2ea24c" /><circle cx="16" cy="16" r="6.800" fill="#fff" /><circle cx="16" cy="16" r="5.300" fill="#4a85ee" /></T> },
  { name: "Блокнот", icon: <T><path d="M10 3l17 2-5 24-19-3z" fill="#8fd0e4" stroke="#4f94ab" /><path d="M10 3l17 2-1 4L9 7z" fill="#cfe9f1" /><path d="M4 25l9-16 3 1-4 16z" fill="#b9e3ef" /><path d="M28 5l3 21-9 3z" fill="#c2a25c" /></T> },
  { name: "AIMP", icon: <T><circle cx="16" cy="16" r="15" fill="#1c1a18" /><circle cx="16" cy="16" r="11.500" fill="#f7a11a" /><path d="M16 7l8 15h-4l-4-8-4 8H8z" fill="#2a1c08" /><path d="M12 19h8v3h-8z" fill="#2a1c08" /></T> },
  { name: "Windows Media Player", icon: <T><path d="M8 5h20v24H8z" fill="#a8d2ee" stroke="#5b9fcb" /><path d="M4 3h20v24H4z" fill="#7fbce6" stroke="#4d93c4" /><circle cx="14" cy="16" r="8.500" fill="#f08226" stroke="#fff" /><path d="M11.500 11l8 5-8 5z" fill="#fff" /></T> },
  { name: "Camera", icon: camera },
  { name: "Remote Desktop", state: "open", icon: <T><path d="M2 2l22 3v18L5 21z" fill="#cfd6e0" stroke="#7b8696" /><path d="M4 4l18 3v14L6 19z" fill="#1230c8" /><path d="M4 4l18 3v4L9 12z" fill="#2f6cf0" /><path d="M10 23l8 1 2 5H8z" fill="#b9c0cb" /><circle cx="24" cy="24" r="7" fill="#e8efe8" stroke="#8a978a" /><path d="M20 22l3 3-3 3M28 20l-3 3 3 3" stroke="#2f9a2f" strokeWidth="2" /></T> },
  { name: "RoboForex-Pro", state: "active", icon: <RLogo size={32} /> },
  { name: "Camera 2", state: "open", icon: camera },
];

function Taskbar() {
  return (
    <div className="flex h-10 shrink-0 items-center border-t border-[#4a3a52] bg-[linear-gradient(90deg,#5a5558_0%,#6f6b62_6%,#72605f_9%,#a78fae_14%,#8c7796_20%,#b29cb8_27%,#8b7690_30%,#7a6680_33%,#c3b0d0_40%,#c6b3cf_50%,#b8a4c4_100%)]">
      <button type="button" aria-label="Пуск" className="flex w-[54px] shrink-0 justify-center">
        <svg width="38" height="38" viewBox="0 0 38 38" aria-hidden="true">
          <circle cx="19" cy="19" r="17.500" fill="#1d5f9c" stroke="#9cc4e0" />
          <path d="M3 17a16 16 0 0 1 32 0c-10 4-22 4-32 0z" fill="#7fb3d8" fillOpacity=".7" />
          <path d="M10 11c3-2 6-2 8 0l-2 8c-2-2-5-2-8 0z" fill="#f0602a" />
          <path d="M19 12c3 2 6 2 9 0l-2 8c-3 2-6 1-9-1z" fill="#8cc63e" />
          <path d="M8 20c3-2 6-2 8 0l-2 8c-2-2-5-2-8-1z" fill="#3f9be8" />
          <path d="M17 21c3 2 6 2 9 0l-2 7c-3 2-6 2-9 0z" fill="#fcd03a" />
        </svg>
      </button>
      <div className="flex shrink-0 gap-1 pl-1.5">
        {apps.map((a) => (
          <button
            key={a.name}
            type="button"
            aria-label={a.name}
            className={`flex h-[39px] w-[58px] items-center justify-center rounded-sm ${
              a.state === "active" ? "border border-white/80 bg-white/60" : a.state === "open" ? "border border-white/60 bg-white/30" : ""
            }`}
          >
            {a.icon}
          </button>
        ))}
      </div>
      <div className="flex h-full flex-1 items-center justify-end bg-[linear-gradient(73deg,#c6b3d2_0%,#c3b0cf_26%,#7a6870_29%,#ab98c0_32%,#8f7f9c_34%,#cbb9dc_37%,#b5a2cf_39%,#7c4a66_41%,#c0aed4_43%,#c4aecb_60%,#bba6cc_70%,#c0add0_78%,#8b7898_86%,#877596_100%)] text-[11px] text-white">
        <span className="pr-4 pb-2">EN</span>
        <span className="mr-3 h-0 w-0 border-x-4 border-b-4 border-x-transparent border-b-white" />
        <svg width="16" height="16" viewBox="0 0 16 16" className="mr-2.5" fill="none" aria-hidden="true"><circle cx="8" cy="8" r="8" fill="#f79a14" /><path d="M5 11V8a3 3 0 0 1 6 0v3M8 8.500v2.500" stroke="#fff" strokeWidth="2" /></svg>
        <svg width="14" height="16" viewBox="0 0 14 16" className="mr-2.5" fill="none" aria-hidden="true"><path d="M1 5h3l4-4v14l-4-4H1z" fill="#fff" stroke="#444" strokeWidth=".5" /><path d="M10 5c1.500 2 1.500 4 0 6M12 4c2 3 2 6 0 8" stroke="#fff" /></svg>
        <svg width="16" height="16" viewBox="0 0 16 16" className="mr-3" fill="none" aria-hidden="true"><path d="M5.500 3.500h10v8h-10zM8 14.500h6M11 12v2" stroke="#fff" strokeWidth="1.500" /><path d="M1 1v4h4V1M3 5v7" stroke="#fff" strokeWidth="1.500" /></svg>
        <p className="w-[66px] text-center leading-[17px]">19:42<br />10.05.2017</p>
        <button type="button" aria-label="Показать рабочий стол" className="ml-1.5 h-full w-[14px] border-l border-[#4a3a52] bg-linear-to-b from-[#c5b8d0] to-[#74668a]" />
      </div>
    </div>
  );
}

export default function App() {
  return (
    <div className="flex h-screen flex-col overflow-hidden bg-[#efefef] font-['Noto_Sans',sans-serif] text-black">
      <div className="flex min-h-0 flex-1 flex-col rounded-bl-lg border-b-2 border-l border-[#2b1c2c] bg-[#cbb7cd]">
        <TitleBar />
        <div className="mb-1.5 ml-1.5 flex min-h-0 flex-1 flex-col border-t border-l border-[#5b4a5e]">
          <MenuBar />
          <Toolbars />
          <main className="flex min-h-0 flex-1 bg-[#f0f0f0]">
            <SidePanels />
            <div className="min-w-0 flex-1 border-l border-gray-600 bg-black"><Chart /></div>
          </main>
          <StatusBar />
        </div>
      </div>
      <div className="flex h-[30px] shrink-0 bg-[linear-gradient(to_bottom,#6a6a6a_0,#b5b5b5_30%,#e4e4e4_60%,#efefef_90%)] text-[10px]">
        <div className="w-[25px] border-r border-gray-300 bg-[#e6f1fb]/60" />
        <div className="ml-5 flex h-5 w-[126px] items-center justify-between rounded-b-md border border-t-0 border-[#8fa3b8] px-1.5 pb-1 text-black">
          <span className="text-[#8a8a8a]">Симпатии:</span>
          <span>2</span>
        </div>
        <div className="ml-auto w-[26px] border-l border-gray-300 bg-[#e6f1fb]/60" />
        <div className="flex w-[15px] items-end justify-center pb-2"><span className="h-0 w-0 border-x-4 border-t-4 border-x-transparent border-t-gray-700" /></div>
      </div>
      <Taskbar />
    </div>
  );
}
